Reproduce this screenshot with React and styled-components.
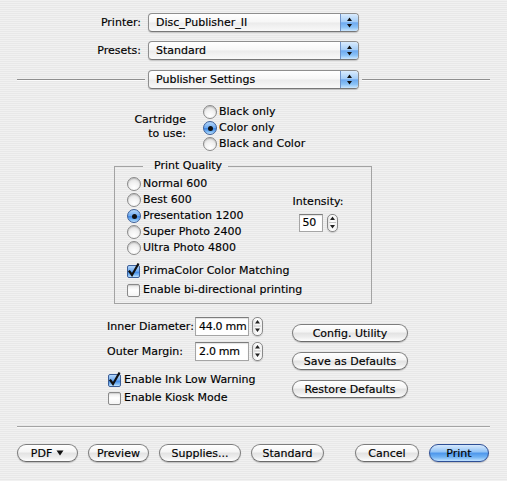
import React from 'react';
import styled, { createGlobalStyle, css } from 'styled-components';

const GlobalStyle = createGlobalStyle`
  html, body { margin: 0; padding: 0; }
  body { font-family: "DejaVu Sans", "Liberation Sans", sans-serif; font-size: 11px; color: #000; }
  #root { width: 507px; height: 481px; }
`;

const Page = styled.div`
  width: 507px;
  height: 481px;
  box-sizing: border-box;
  padding-top: 13px;
  display: flex;
  flex-direction: column;
  overflow: hidden;
  background: repeating-linear-gradient(to bottom, #f1f1f1 0px, #f1f1f1 1px, #e8e8e8 1px, #e8e8e8 2px);
  font-family: "DejaVu Sans", "Liberation Sans", sans-serif;
  font-size: 11px;
  line-height: 14px;
  color: #000;
  -webkit-text-stroke: 0.15px #000;
`;

const FieldRow = styled.div`
  display: grid;
  grid-template-columns: 141px 211px;
  column-gap: 7px;
  align-items: center;
  & + & { margin-top: 9px; }
`;

const RowLabel = styled.label`
  text-align: right;
  white-space: nowrap;
`;

const PopupBox = styled.div`
  box-sizing: border-box;
  width: 211px;
  height: 19px;
  display: flex;
  align-items: stretch;
  overflow: hidden;
  border: 1px solid #8e8e8e;
  border-bottom-color: #777;
  border-radius: 4px;
  background: linear-gradient(#ffffff, #f6f6f6 48%, #ebebeb 52%, #f9f9f9);
  box-shadow: 0 1px 1px rgba(0, 0, 0, 0.18);
`;

const PopupText = styled.span`
  flex: 1;
  padding-left: 7px;
  display: flex;
  align-items: center;
  white-space: nowrap;
`;

const PopupArrows = styled.span`
  width: 17px;
  border-left: 1px solid #6f93c8;
  background: linear-gradient(#d9ebfd, #a6cef7 45%, #6eaaf0 52%, #8ac2f6 78%, #cbe6fe);
  display: flex;
  align-items: center;
  justify-content: center;
`;

const PaneRow = styled.div`
  display: grid;
  grid-template-columns: 1fr 211px 1fr;
  column-gap: 3px;
  align-items: center;
  padding: 0 17px;
  margin-top: 10px;
`;

const Rule = styled.div`
  height: 1px;
  background: #8f8f8f;
  box-shadow: 0 1px 0 #fbfbfb;
`;

const CartridgeRow = styled.div`
  display: grid;
  grid-template-columns: 186px auto;
  column-gap: 17px;
  margin-top: 15px;
`;

const StackLabel = styled.div`
  text-align: right;
  margin-top: 9px;
  line-height: 14px;
`;

const OptionList = styled.div`
  display: flex;
  flex-direction: column;
`;

const OptionRow = styled.label`
  height: 16px;
  display: flex;
  align-items: center;
  gap: 2px;
  white-space: nowrap;
`;

const RadioDot = styled.span`
  box-sizing: border-box;
  width: 14px;
  height: 14px;
  flex: none;
  border-radius: 50%;
  display: flex;
  align-items: center;
  justify-content: center;
  border: 1px solid #8a8a8a;
  background: radial-gradient(circle at 50% 80%, #ffffff 0%, #f2f2f2 45%, #d6d6d6 100%);
  box-shadow: inset 0 1px 1px rgba(0, 0, 0, 0.18);
  ${p => p.$on && css`
    border-color: #3c5f98;
    background: linear-gradient(#b5d7fa, #6eaaf0 48%, #3f88e6 55%, #86c0f6 85%, #c4e4ff);
    box-shadow: none;
    &::after {
      content: "";
      width: 5px;
      height: 5px;
      border-radius: 50%;
      background: #111;
    }
  `}
`;

const CheckBox = styled.span`
  box-sizing: border-box;
  width: 13px;
  height: 13px;
  flex: none;
  border-radius: 2px;
  display: flex;
  align-items: center;
  justify-content: center;
  border: 1px solid #8a8a8a;
  background: linear-gradient(#e9e9e9, #ffffff 45%, #f4f4f4);
  box-shadow: inset 0 1px 1px rgba(0, 0, 0, 0.12);
  margin-left: ${p => p.$indent || 0}px;
  ${p => p.$on && css`
    border-color: #3c5f98;
    background: linear-gradient(#b5d7fa, #6eaaf0 48%, #3f88e6 55%, #86c0f6 85%, #c4e4ff);
    box-shadow: none;
  `}
  svg { overflow: visible; }
`;

const CheckRow = styled.label`
  height: 18px;
  display: flex;
  align-items: center;
  gap: 3px;
  white-space: nowrap;
`;

const GroupBox = styled.fieldset`
  margin: 7px 0 0 114px;
  width: 258px;
  min-width: 0;
  box-sizing: border-box;
  padding: 3px 12px 4px 12px;
  border: 1px solid #a3a3a3;
`;

const GroupTitle = styled.legend`
  margin-left: 16px;
  padding: 0 6px 0 11px;
  line-height: 14px;
`;

const QualityBody = styled.div`
  display: grid;
  grid-template-columns: 161px 60px;
`;

const IntensityCol = styled.div`
  margin-top: 19px;
  display: flex;
  flex-direction: column;
  align-items: center;
  gap: 5px;
`;

const StepperRow = styled.div`
  display: flex;
  align-items: center;
  gap: ${p => p.$gap}px;
`;

const TextField = styled.span`
  box-sizing: border-box;
  width: ${p => p.$w}px;
  height: ${p => p.$h}px;
  padding-left: 3px;
  display: flex;
  align-items: center;
  letter-spacing: -0.3px;
  background: #fff;
  border: 1px solid #a5a5a5;
  border-top-color: #7c7c7c;
  box-shadow: inset 0 1px 1px rgba(0, 0, 0, 0.12);
  white-space: nowrap;
  overflow: hidden;
`;

const StepperBox = styled.span`
  box-sizing: border-box;
  width: 11px;
  height: ${p => p.$h}px;
  flex: none;
  border: 1px solid #8a8a8a;
  border-radius: 5px;
  background: linear-gradient(to right, #e4e4e4, #ffffff 45%, #f0f0f0);
  box-shadow: 0 1px 1px rgba(0, 0, 0, 0.15);
  display: flex;
  align-items: center;
  justify-content: center;
`;

const CheckList = styled.div`
  margin-top: 6px;
  display: flex;
  flex-direction: column;
  gap: 1px;
`;

const LowerSection = styled.div`
  display: grid;
  grid-template-columns: 185px 116px;
  padding-left: 107px;
`;

const LowerLeft = styled.div`
  padding-top: 13px;
  display: flex;
  flex-direction: column;
`;

const NumRow = styled.div`
  height: 19px;
  display: flex;
  align-items: center;
  & + & { margin-top: 6px; }
`;

const NumLabel = styled.label`
  width: 88px;
  white-space: nowrap;
`;

const LowerChecks = styled.div`
  margin-top: 10px;
  display: flex;
  flex-direction: column;
`;

const LowerRight = styled.div`
  padding-top: 20px;
  display: flex;
  flex-direction: column;
  gap: 10px;
`;

const PushButton = styled.button`
  box-sizing: border-box;
  width: ${p => p.$w}px;
  height: 18px;
  padding: 0;
  display: flex;
  align-items: center;
  justify-content: center;
  gap: 4px;
  font-family: inherit;
  font-size: 11px;
  color: #000;
  -webkit-text-stroke: 0.15px #000;
  white-space: nowrap;
  border: 1px solid #7d7d7d;
  border-bottom-color: #6a6a6a;
  border-radius: 9px;
  background: linear-gradient(#ffffff, #f5f5f5 42%, #e3e3e3 52%, #ededed 75%, #ffffff);
  box-shadow: 0 1px 1px rgba(0, 0, 0, 0.2);
  ${p => p.$default && css`
    border-color: #2e4f95;
    background: linear-gradient(#d6e9fd, #93c4f6 42%, #4f98ec 52%, #70b2f3 75%, #c2e2ff);
  `}
`;

const Separator = styled.div`
  margin: 19px 17px 0;
  height: 1px;
  background: #a4a4a4;
  box-shadow: 0 1px 0 #f7f7f7;
`;

const ButtonBar = styled.div`
  margin-top: 17px;
  padding: 0 18px 0 17px;
  display: flex;
  align-items: center;
  gap: 10px;
`;

const Spacer = styled.div`
  flex: 1;
`;

const UpDown = () => (
  <svg width="9" height="13" viewBox="0 0 9 13">
    <path d="M2 5 L4.5 1.5 L7 5 Z M2 8 L4.5 11.5 L7 8 Z" fill="#111" />
  </svg>
);

const StepArrows = ({ h }) => (
  <svg width="9" height={h - 2} viewBox={`0 0 9 ${h - 2}`}>
    <path d={`M2 ${h / 2 - 4} L4.5 ${h / 2 - 7.5} L7 ${h / 2 - 4} Z M2 ${h / 2 + 1} L4.5 ${h / 2 + 4.5} L7 ${h / 2 + 1} Z`} fill="#222" />
    <line x1="1" x2="8" y1={h / 2 - 1.5} y2={h / 2 - 1.5} stroke="#c8c8c8" strokeWidth="1" />
  </svg>
);

const Popup = ({ children }) => (
  <PopupBox>
    <PopupText>{children}</PopupText>
    <PopupArrows><UpDown /></PopupArrows>
  </PopupBox>
);

const Radio = ({ on, children }) => (
  <OptionRow>
    <RadioDot $on={on} />
    {children}
  </OptionRow>
);

const Check = ({ on, indent, children }) => (
  <CheckRow>
    <CheckBox $on={on} $indent={indent}>
      {on && (
        <svg width="11" height="11" viewBox="0 0 11 11">
          <path d="M1.5 5.5 L4 9 L10 -1.5" fill="none" stroke="#111" strokeWidth="2.2" strokeLinecap="square" />
        </svg>
      )}
    </CheckBox>
    {children}
  </CheckRow>
);

const Stepper = ({ h }) => (
  <StepperBox $h={h}><StepArrows h={h} /></StepperBox>
);

const Caret = () => (
  <svg width="8" height="6" viewBox="0 0 8 6">
    <path d="M0.5 0.5 L7.5 0.5 L4 5.5 Z" fill="#111" />
  </svg>
);

export default function App() {
  return (
    <>
      <GlobalStyle />
      <Page>
        <FieldRow>
          <RowLabel>Printer:</RowLabel>
          <Popup>Disc_Publisher_II</Popup>
        </FieldRow>
        <FieldRow>
          <RowLabel>Presets:</RowLabel>
          <Popup>Standard</Popup>
        </FieldRow>

        <PaneRow>
          <Rule />
          <Popup>Publisher Settings</Popup>
          <Rule />
        </PaneRow>

        <CartridgeRow>
          <StackLabel>Cartridge<br />to use:</StackLabel>
          <OptionList>
            <Radio>Black only</Radio>
            <Radio on>Color only</Radio>
            <Radio>Black and Color</Radio>
          </OptionList>
        </CartridgeRow>

        <GroupBox>
          <GroupTitle>Print Quality</GroupTitle>
          <QualityBody>
            <OptionList>
              <Radio>Normal 600</Radio>
              <Radio>Best 600</Radio>
              <Radio on>Presentation 1200</Radio>
              <Radio>Super Photo 2400</Radio>
              <Radio>Ultra Photo 4800</Radio>
            </OptionList>
            <IntensityCol>
              <label>Intensity:</label>
              <StepperRow $gap={4}>
                <TextField $w={24} $h={18}>50</TextField>
                <Stepper h={18} />
              </StepperRow>
            </IntensityCol>
          </QualityBody>
          <CheckList>
            <Check on>PrimaColor Color Matching</Check>
            <Check>Enable bi-directional printing</Check>
          </CheckList>
        </GroupBox>

        <LowerSection>
          <LowerLeft>
            <NumRow>
              <NumLabel>Inner Diameter:</NumLabel>
              <StepperRow $gap={3}>
                <TextField $w={54} $h={19}>44.0 mm</TextField>
                <Stepper h={19} />
              </StepperRow>
            </NumRow>
            <NumRow>
              <NumLabel>Outer Margin:</NumLabel>
              <StepperRow $gap={3}>
                <TextField $w={54} $h={19}>2.0 mm</TextField>
                <Stepper h={19} />
              </StepperRow>
            </NumRow>
            <LowerChecks>
              <Check on indent={1}>Enable Ink Low Warning</Check>
              <Check indent={1}>Enable Kiosk Mode</Check>
            </LowerChecks>
          </LowerLeft>
          <LowerRight>
            <PushButton $w={116}>Config. Utility</PushButton>
            <PushButton $w={116}>Save as Defaults</PushButton>
            <PushButton $w={116}>Restore Defaults</PushButton>
          </LowerRight>
        </LowerSection>

        <Separator />

        <ButtonBar>
          <PushButton $w={61}>PDF <Caret /></PushButton>
          <PushButton $w={61}>Preview</PushButton>
          <PushButton $w={82}>Supplies...</PushButton>
          <PushButton $w={73}>Standard</PushButton>
          <Spacer />
          <PushButton $w={64}>Cancel</PushButton>
          <PushButton $w={60} $default>Print</PushButton>
        </ButtonBar>
      </Page>
    </>
  );
}
